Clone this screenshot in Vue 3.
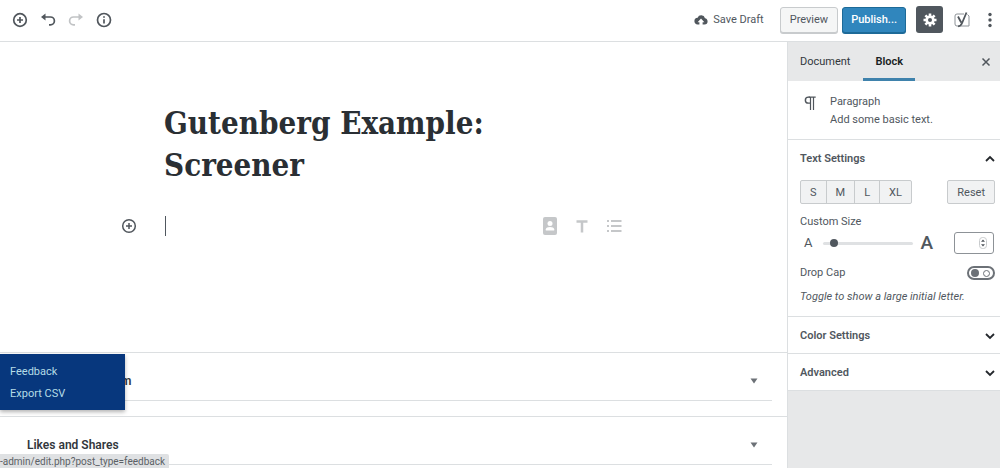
<script setup>
import { ref } from 'vue'

const size = ref(4)
const customSize = ref('')
const dropCap = ref(false)
const title = ref('Gutenberg Example:\nScreener')
const sizes = ['S', 'M', 'L', 'XL']
const closedPanels = ['Color Settings', 'Advanced']
const metaBoxes = [
  { name: 'm', behindMenu: true },
  { name: 'Likes and Shares', behindMenu: false },
]
</script>

<template>
  <div class="editor">
    <header class="topbar">
      <div class="tools">
        <button class="icon" aria-label="Add block">
          <svg width="16" height="16" viewBox="0 0 16 16"><circle cx="8" cy="8" r="6.3" /><path d="M8 5v6M5 8h6" /></svg>
        </button>
        <button class="icon" aria-label="Undo">
          <svg width="16" height="16" viewBox="0 0 16 16"><path d="M3 5h7.500a3.900 3.900 0 0 1 0 7.800H9" /><path class="solid" d="M1 5 5.500 1.500v7z" /></svg>
        </button>
        <button class="icon faded" aria-label="Redo" disabled>
          <svg width="16" height="16" viewBox="0 0 16 16"><path d="M13 5H5.500a3.900 3.900 0 0 0 0 7.800H7" /><path class="solid" d="M15 5 10.500 1.500v7z" /></svg>
        </button>
        <button class="icon" aria-label="Content structure">
          <svg width="16" height="16" viewBox="0 0 16 16"><circle cx="8" cy="8" r="6.500" /><path d="M8 7.200v4.300M8 4.300v1.500" /></svg>
        </button>
      </div>
      <div class="actions">
        <button class="save">
          <svg width="14" height="12" viewBox="0 0 14 12"><path class="cloud" d="M11 4.200A3.900 3.900 0 0 0 3.600 3.800 3.400 3.400 0 0 0 .4 7.300C.4 9.200 1.800 10.500 3.600 10.500H5.400V8.300H3.600L7 4.500l3.400 3.800H8.600v2.200h2c1.800 0 3-1.300 3-3.100 0-1.700-1.100-3-2.600-3.200z" /></svg>
          Save Draft
        </button>
        <button class="btn preview">Preview</button>
        <button class="btn publish">Publish...</button>
        <button class="gear" aria-label="Settings">
          <svg width="14" height="14" viewBox="0 0 14 14"><g class="teeth"><path d="M7 .5v13M.5 7h13M2.400 2.400l9.200 9.200M11.600 2.400l-9.200 9.200" /></g><circle class="hub" cx="7" cy="7" r="4.600" /><circle class="hole" cx="7" cy="7" r="2" /></svg>
        </button>
        <button class="icon yoast" aria-label="Yoast SEO">
          <svg width="18" height="18" viewBox="0 0 18 18"><path class="frame" d="M11 3H4a2 2 0 0 0-2 2v8a2 2 0 0 0 2 2h12V5l-1.500-1.500" /><path class="why" d="M5 5.500 8.200 11.500M13.500 1.500 9.300 11.500c-1 2.500-2 3.800-4.200 3.900" /></svg>
        </button>
        <button class="icon more" aria-label="More">
          <svg width="6" height="16" viewBox="0 0 6 16"><circle cx="3" cy="2.500" r="1.700" /><circle cx="3" cy="8" r="1.700" /><circle cx="3" cy="13.500" r="1.700" /></svg>
        </button>
      </div>
    </header>

    <div class="body">
      <main class="canvas">
        <section class="writing">
          <textarea v-model="title" class="title" rows="2" aria-label="Title"></textarea>
          <div class="block">
            <button class="icon" aria-label="Add block">
              <svg width="16" height="16" viewBox="0 0 16 16"><circle cx="8" cy="8" r="6.300" /><path d="M8 5v6M5 8h6" /></svg>
            </button>
            <div class="caret"></div>
            <div class="shortcuts">
              <button class="icon" aria-label="Contact info">
                <svg width="16" height="20" viewBox="0 0 16 20"><rect class="card-shape" x="1" y="1" width="14" height="18" rx="2" /><circle class="white" cx="8" cy="7.500" r="2.500" /><path class="white" d="M3.800 14.500v-1.300c0-3 8.400-3 8.400 0v1.300z" /></svg>
              </button>
              <button class="icon" aria-label="Text">
                <svg width="14" height="14" viewBox="0 0 14 14"><path class="thick" d="M1.500 2.500h11M7 2.500v11" /></svg>
              </button>
              <button class="icon" aria-label="List">
                <svg width="16" height="14" viewBox="0 0 16 14"><path class="thick2" d="M1 2h2M5 2h10.500M1 7h2M5 7h10.500M1 12h2M5 12h10.500" /></svg>
              </button>
            </div>
          </div>
        </section>
        <section v-for="box in metaBoxes" :key="box.name" class="metabox">
          <button class="metabox-head" :class="{ indented: box.behindMenu }">
            {{ box.name }}
            <svg width="8" height="6" viewBox="0 0 8 6"><path d="M.5.500h7L4 5.500z" /></svg>
          </button>
        </section>
      </main>

      <aside class="sidebar">
        <nav class="tabs">
          <button class="tab">Document</button>
          <button class="tab active">Block</button>
          <button class="icon close" aria-label="Close settings">
            <svg width="10" height="10" viewBox="0 0 10 10"><path d="M1.500 1.500l7 7M8.500 1.500l-7 7" /></svg>
          </button>
        </nav>
        <div class="card">
          <svg width="12" height="15" viewBox="0 0 12 15"><path d="M11.700 1.200H4.600M6.500 1v13M9.500 1v13" /><path class="bowl" d="M6 .5H4.300a3.600 3.600 0 0 0 0 7.300H6V6.600H4.500a2.400 2.400 0 0 1 0-4.800H6z" /></svg>
          <div>
            <div>Paragraph</div>
            <div>Add some basic text.</div>
          </div>
        </div>
        <section class="panel">
          <button class="panel-head">
            Text Settings
            <svg width="10" height="8" viewBox="0 0 10 8"><path d="M1 6l4-4 4 4" /></svg>
          </button>
          <div class="row sizes-row">
            <div class="sizes">
              <button v-for="s in sizes" :key="s">{{ s }}</button>
            </div>
            <button class="reset">Reset</button>
          </div>
          <label class="caption" for="size-range">Custom Size</label>
          <div class="range-row">
            <span class="small-a">A</span>
            <input id="size-range" v-model="size" type="range" min="0" max="50" />
            <span class="big-a">A</span>
            <span class="number">
              <input v-model="customSize" type="text" aria-label="Custom size in pixels" />
              <svg width="8" height="12" viewBox="0 0 8 12"><rect x=".5" y=".5" width="7" height="11" rx="3" /><path d="M2 4.800 4 2.500l2 2.300zM2 7.200l2 2.300 2-2.300z" /></svg>
            </span>
          </div>
          <div class="row drop-row">
            <label for="drop-cap">Drop Cap</label>
            <input id="drop-cap" v-model="dropCap" class="toggle" type="checkbox" />
          </div>
          <p class="help">Toggle to show a large initial letter.</p>
        </section>
        <section v-for="p in closedPanels" :key="p" class="panel">
          <button class="panel-head">
            {{ p }}
            <svg width="10" height="8" viewBox="0 0 10 8"><path d="M1 2l4 4 4-4" /></svg>
          </button>
        </section>
      </aside>
    </div>

    <nav class="flyout">
      <a href="#feedback">Feedback</a>
      <a href="#export">Export CSV</a>
    </nav>
    <div class="status">-admin/edit.php?post_type=feedback</div>
  </div>
</template>

<style>
body {
  overflow: hidden;
}
</style>

<style scoped>
* {
  box-sizing: border-box;
}
.editor {
  position: relative;
  display: flex;
  flex-direction: column;
  height: 100vh;
  overflow: hidden;
  background: #fff;
  color: #50575e;
  font: 11px/18px Roboto, "Liberation Sans", sans-serif;
}
button,
input,
textarea {
  margin: 0;
  padding: 0;
  border: 0;
  background: none;
  color: inherit;
  font: inherit;
}
svg {
  display: block;
  flex: none;
  fill: none;
  stroke: #50565c;
  stroke-width: 1.5;
}
.icon {
  display: flex;
  align-items: center;
  justify-content: center;
}
.topbar {
  display: flex;
  flex: none;
  align-items: center;
  justify-content: space-between;
  height: 42px;
  padding: 0 7px 2px 12px;
  border-bottom: 1px solid #dcdfe1;
}
.tools {
  display: flex;
  gap: 12px;
}
.tools svg {
  stroke-width: 1.700;
}
.solid {
  fill: #50565c;
  stroke: none;
}
.faded {
  opacity: 0.35;
}
.actions {
  display: flex;
  align-items: center;
}
.save {
  display: flex;
  align-items: center;
  gap: 5px;
  margin-right: 16px;
  padding-top: 1px;
}
.cloud {
  fill: #50565c;
  stroke: none;
}
.btn {
  height: 26px;
  padding: 1px 9px 0;
  border: 1px solid #c8cbcd;
  border-radius: 3px;
  background: #f5f6f6;
  box-shadow: 0 1px 0 #c8cbcd;
}
.publish {
  margin-left: 4px;
  padding: 1px 8px 0;
  border-color: #1d6a98;
  background: #3086bd;
  box-shadow: 0 1px 0 #1d6a98;
  color: #fff;
  font-weight: 500;
}
.gear {
  display: flex;
  align-items: center;
  justify-content: center;
  width: 27px;
  height: 27px;
  margin-left: 10px;
  border-radius: 3px;
  background: #50575e;
}
.teeth {
  stroke: #fff;
  stroke-width: 2.600;
}
.hub {
  fill: #fff;
  stroke: none;
}
.hole {
  fill: #50575e;
  stroke: none;
}
.yoast {
  margin-left: 10px;
}
.frame {
  stroke: #8d9297;
  stroke-width: 1;
}
.why {
  stroke-width: 1.800;
}
.more {
  margin-left: 16px;
}
.more svg {
  fill: #50565c;
  stroke: none;
}
.body {
  display: flex;
  flex: 1;
  min-height: 0;
}
.canvas {
  flex: 1;
  min-width: 0;
}
.writing {
  height: 310px;
  padding: 60px 21% 0 121px;
}
.title {
  display: block;
  width: 100%;
  height: 84px;
  margin-left: 43px;
  overflow: hidden;
  resize: none;
  outline: 0;
  color: #2a2f34;
  font: bold 31px/42px "DejaVu Serif Condensed", "DejaVu Serif", serif;
}
.block {
  display: flex;
  align-items: center;
  margin-top: 30px;
}
.caret {
  width: 1px;
  height: 20px;
  margin-left: 28px;
  background: #50575e;
}
.shortcuts {
  display: flex;
  align-items: center;
  gap: 17px;
  margin-left: auto;
}
.shortcuts svg {
  stroke: #c5c7c9;
}
.shortcuts .card-shape {
  fill: #c5c7c9;
  stroke: none;
}
.shortcuts .white {
  fill: #fff;
  stroke: none;
}
.thick {
  stroke-width: 2.500;
}
.thick2 {
  stroke-width: 1.800;
}
.metabox {
  height: 64px;
  padding: 0 15px;
  border-top: 1px solid #dcdfe1;
}
.metabox-head {
  display: flex;
  align-items: center;
  justify-content: space-between;
  width: 100%;
  height: 48px;
  padding: 8px 14px 0 12px;
  border-bottom: 1px solid #dcdfe1;
  color: #32373c;
  font-size: 12px;
  font-weight: 600;
}
.metabox-head.indented {
  padding-left: 106px;
}
.metabox-head svg {
  fill: #6c7177;
  stroke: none;
}
.sidebar {
  flex: none;
  width: 213px;
  border-left: 1px solid #dcdfe1;
  background: #e7e8e9;
}
.tabs {
  display: flex;
  height: 39px;
}
.tab {
  padding: 4px 12px 0;
  border-bottom: 3px solid transparent;
  color: #32373c;
}
.tab.active {
  margin-left: 1px;
  border-bottom-color: #3f82ac;
  color: #191e23;
  font-weight: 600;
}
.close {
  margin-left: auto;
  padding-right: 9px;
}
.card {
  display: flex;
  gap: 14px;
  height: 58px;
  padding: 12px 16px 0;
  background: #fff;
}
.card svg {
  margin-top: 3px;
  stroke-width: 1.200;
}
.bowl {
  fill: #50565c;
  stroke: none;
}
.panel {
  border-top: 1px solid #dcdfe1;
  background: #fff;
}
.panel:last-child {
  border-bottom: 1px solid #dcdfe1;
}
.panel-head {
  display: flex;
  align-items: center;
  justify-content: space-between;
  width: 100%;
  height: 36px;
  padding: 1px 5px 0 12px;
  color: #50575e;
  font-weight: 600;
}
.panel-head svg {
  stroke: #24282c;
  stroke-width: 1.800;
}
.row {
  display: flex;
  align-items: center;
  justify-content: space-between;
  padding: 0 5px 0 12px;
}
.sizes-row {
  padding-top: 4px;
}
.sizes {
  display: flex;
  border: 1px solid #c8cbcd;
  border-radius: 2px;
  background: #f1f2f3;
}
.sizes button {
  height: 22px;
  padding: 1px 9px 0;
}
.sizes button + button {
  border-left: 1px solid #c8cbcd;
}
.reset {
  height: 24px;
  padding: 1px 9px 0;
  border: 1px solid #c8cbcd;
  border-radius: 2px;
  background: #f1f2f3;
}
.caption {
  display: block;
  padding: 9px 12px 0;
}
.range-row {
  display: flex;
  align-items: center;
  height: 24px;
  padding: 0 6px 0 16px;
}
.small-a {
  font-size: 13px;
}
.big-a {
  font-size: 19px;
  font-weight: 500;
}
input[type="range"] {
  flex: 1;
  min-width: 0;
  height: 10px;
  margin: 0 7px 0 11px;
  appearance: none;
}
input[type="range"]::-webkit-slider-runnable-track {
  height: 3px;
  border-radius: 2px;
  background: #dfe1e3;
}
input[type="range"]::-webkit-slider-thumb {
  width: 8px;
  height: 8px;
  margin-top: -3px;
  border-radius: 50%;
  background: #50575e;
  appearance: none;
}
.number {
  display: flex;
  align-items: center;
  width: 40px;
  height: 22px;
  margin-left: 21px;
  padding: 0 6px 0 4px;
  border: 1px solid #8d9297;
  border-radius: 3px;
}
.number input {
  flex: 1;
  min-width: 0;
}
.number svg {
  stroke: #c8cbcd;
  stroke-width: 1;
}
.number path {
  fill: #50565c;
  stroke: none;
}
.drop-row {
  height: 18px;
  margin-top: 9px;
}
.toggle {
  display: flex;
  align-items: center;
  justify-content: space-between;
  width: 28px;
  height: 14px;
  padding: 0 3px 0 2px;
  border: 2px solid #6c7177;
  border-radius: 7px;
  appearance: none;
}
.toggle::before {
  content: "";
  width: 8px;
  height: 8px;
  border-radius: 50%;
  background: #6c7177;
}
.toggle::after {
  content: "";
  width: 5px;
  height: 5px;
  border: 1px solid #6c7177;
  border-radius: 50%;
}
.help {
  margin: 0;
  padding: 6px 12px 10px;
  font-style: italic;
  white-space: nowrap;
}
.flyout {
  position: absolute;
  bottom: 58px;
  left: 0;
  display: flex;
  flex-direction: column;
  width: 125px;
  padding: 7px 10px 5px;
  background: #07377d;
  box-shadow: 0 2px 4px rgba(0, 0, 0, 0.3);
}
.flyout a {
  color: #b5dce6;
  line-height: 22px;
  text-decoration: none;
}
.status {
  position: absolute;
  bottom: 0;
  left: 0;
  padding: 1px 4px 0 0;
  border-radius: 0 2px 0 0;
  background: #dfe1e3;
  color: #5c6166;
  font-size: 10px;
  line-height: 13px;
}
</style>
